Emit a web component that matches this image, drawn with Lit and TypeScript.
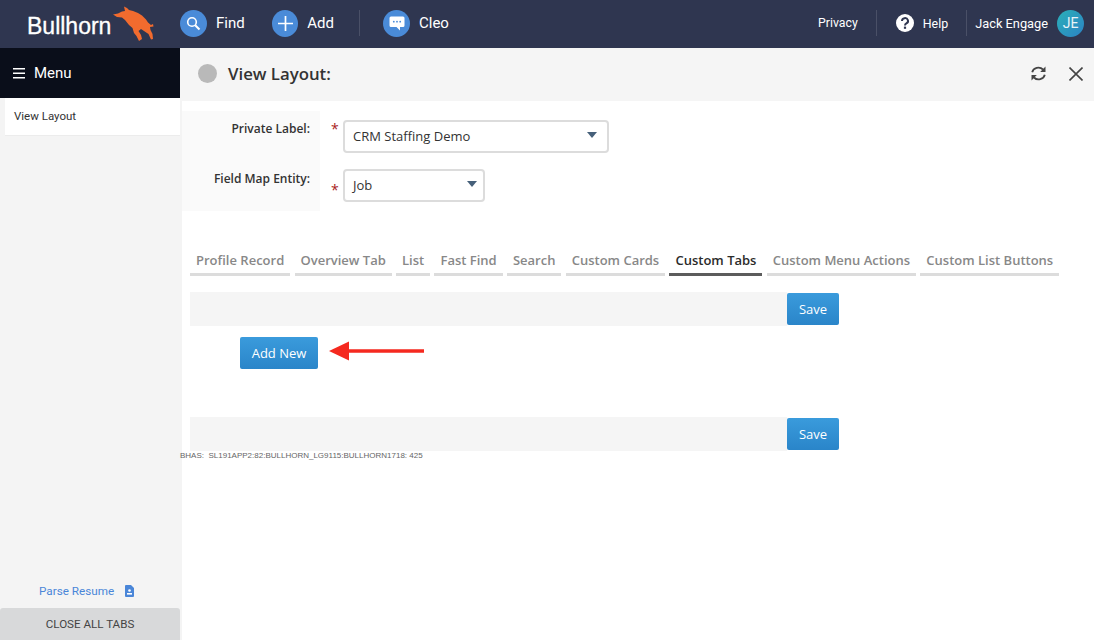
import { LitElement, html, css, svg } from "lit";
import { customElement, property } from "lit/decorators.js";

const TABS = [
  "Profile Record",
  "Overview Tab",
  "List",
  "Fast Find",
  "Search",
  "Custom Cards",
  "Custom Tabs",
  "Custom Menu Actions",
  "Custom List Buttons",
];

const bull = svg`<svg class="bull" width="50" height="42" viewBox="0 0 50 42">
  <path fill="#f26b2e" d="M5 12.5 L10 11.5 L14 9.5 L17 9 L16 4.5 L19 6 L21 8 L25 9 L30 11 L34 13.5 L38 17.5 L40 20.5 L43 23 L45 22 L45.5 24.5 L42 25 L42.5 28 L44.5 32 L45 37 L43 37.5 L40.5 32 L36 29 L33 27 L30.5 29 L33 33 L34 37 L31 39 L28.5 34 L26 31 L24.5 26 L21 23 L17 18 L14 15.5 L9 15 Z"/>
</svg>`;

@customElement("top-bar")
export class TopBar extends LitElement {
  static styles = css`
    :host {
      display: flex;
      align-items: center;
      height: 48px;
      background: #2f3650;
      color: #fff;
      font-family: Roboto, sans-serif;
      padding-bottom: 2px;
      box-sizing: border-box;
    }
    .logo {
      display: flex;
      align-items: flex-start;
      width: 180px;
      padding-left: 27px;
      box-sizing: border-box;
      height: 46px;
    }
    .wordmark {
      font-family: "Liberation Sans", sans-serif;
      font-size: 23px;
      margin-top: 13px;
      line-height: 27px;
      -webkit-text-stroke: 0.3px #fff;
    }
    .bull {
      margin-left: -3px;
      margin-top: 2px;
      flex: none;
    }
    .action {
      display: flex;
      align-items: center;
      gap: 9px;
      font-size: 15px;
    }
    .circle {
      width: 27px;
      height: 27px;
      border-radius: 50%;
      background: #4a8bd8;
      display: flex;
      align-items: center;
      justify-content: center;
    }
    .find {
      width: 65px;
      margin-right: 27px;
    }
    .add {
      width: 62px;
    }
    .divider {
      width: 1px;
      height: 26px;
      background: #4a5067;
    }
    .first-div {
      margin-left: 25px;
      margin-right: 23px;
    }
    .right {
      margin-left: auto;
      display: flex;
      align-items: center;
      font-size: 12.8px;
      padding-right: 10px;
    }
    .privacy {
      margin-right: 18px;
      font-size: 12.3px;
    }
    .help {
      display: flex;
      align-items: center;
      gap: 9px;
      margin: 0 18px 0 19px;
      font-size: 12.4px;
    }
    .user {
      margin: 0 9px 0 8px;
    }
    .avatar {
      width: 27px;
      height: 27px;
      border-radius: 50%;
      background: linear-gradient(135deg, #2bb0b8, #2b82c4);
      display: flex;
      align-items: center;
      justify-content: center;
      font-size: 14px;
      color: #e8f4f8;
    }
  `;

  render() {
    return html`
      <div class="logo"><span class="wordmark">Bullhorn</span>${bull}</div>
      <div class="action find">
        <span class="circle">
          <svg width="15" height="15" viewBox="0 0 15 15" fill="none" stroke="#fff" stroke-width="1.6">
            <circle cx="6" cy="6" r="4.3"></circle>
            <path d="M9.2 9.2 L13.5 13.5" stroke-width="2"></path>
          </svg>
        </span>
        Find
      </div>
      <div class="action add">
        <span class="circle">
          <svg width="15" height="15" viewBox="0 0 15 15" stroke="#fff" stroke-width="1.7">
            <path d="M7.5 0 V15 M0 7.5 H15"></path>
          </svg>
        </span>
        Add
      </div>
      <div class="divider first-div"></div>
      <div class="action">
        <span class="circle">
          <svg width="16" height="15" viewBox="0 0 16 15">
            <path fill="#fff" d="M2 0.5 H14 A1.5 1.5 0 0 1 15.5 2 V9.5 A1.5 1.5 0 0 1 14 11 H11 V14.5 L7.5 11 H2 A1.5 1.5 0 0 1 0.5 9.5 V2 A1.5 1.5 0 0 1 2 0.5 Z"></path>
            <circle cx="4.8" cy="5.7" r="0.9" fill="#4a8bd8"></circle>
            <circle cx="8" cy="5.7" r="0.9" fill="#4a8bd8"></circle>
            <circle cx="11.2" cy="5.7" r="0.9" fill="#4a8bd8"></circle>
          </svg>
        </span>
        Cleo
      </div>
      <div class="right">
        <span class="privacy">Privacy</span>
        <div class="divider"></div>
        <div class="help">
          <svg width="18" height="18" viewBox="0 0 18 18">
            <circle cx="9" cy="9" r="9" fill="#fff"></circle>
            <path d="M6 7 A3 2.8 0 1 1 10.4 9.4 C9.4 10 9 10.4 9 11.4" fill="none" stroke="#2f3650" stroke-width="2"></path>
            <rect x="7.9" y="12.6" width="2.2" height="2.2" fill="#2f3650"></rect>
          </svg>
          Help
        </div>
        <div class="divider"></div>
        <span class="user">Jack Engage</span>
        <span class="avatar">JE</span>
      </div>
    `;
  }
}

@customElement("side-menu")
export class SideMenu extends LitElement {
  static styles = css`
    :host {
      display: flex;
      flex-direction: column;
      width: 180px;
      flex: none;
      background: #f4f4f4;
      box-shadow: 2px 0 0 #f4f4f4;
      font-family: Roboto, sans-serif;
    }
    .head {
      height: 50px;
      background: #0a0e1a;
      color: #fff;
      display: flex;
      align-items: center;
      gap: 9px;
      padding-left: 13px;
      font-size: 15px;
      box-sizing: border-box;
    }
    .item {
      height: 38px;
      margin-left: 5px;
      background: #fff;
      border-bottom: 1px solid #ececec;
      box-sizing: border-box;
      display: flex;
      align-items: center;
      padding: 0 0 1px 9px;
      font-size: 11.5px;
      color: #333;
    }
    .parse {
      margin-top: auto;
      display: flex;
      align-items: center;
      gap: 11px;
      padding-left: 39px;
      height: 34px;
      font-size: 11.7px;
      color: #4a86d8;
    }
    .close {
      height: 32px;
      background: #d8d9da;
      border-radius: 3px 3px 0 0;
      display: flex;
      align-items: center;
      justify-content: center;
      font-size: 11.6px;
      color: #444;
    }
  `;

  render() {
    return html`
      <div class="head">
        <svg width="12" height="11" viewBox="0 0 12 11" fill="#fff">
          <rect y="0" width="12" height="1.5"></rect>
          <rect y="4.5" width="12" height="1.5"></rect>
          <rect y="9" width="12" height="1.5"></rect>
        </svg>
        Menu
      </div>
      <div class="item">View Layout</div>
      <div class="parse">
        Parse Resume
        <svg width="9" height="12" viewBox="0 0 9 12">
          <path fill="#4a86d8" d="M1 0 H6 L9 3 V11 A1 1 0 0 1 8 12 H1 A1 1 0 0 1 0 11 V1 A1 1 0 0 1 1 0 Z"></path>
          <circle cx="4.5" cy="5.5" r="1.3" fill="#fff"></circle>
          <rect x="2" y="8" width="5" height="1.6" fill="#fff"></rect>
        </svg>
      </div>
      <div class="close">CLOSE ALL TABS</div>
    `;
  }
}

@customElement("select-box")
export class SelectBox extends LitElement {
  @property() value = "";
  @property({ type: Number }) width = 100;

  static styles = css`
    :host {
      display: block;
    }
    .box {
      height: 33px;
      box-sizing: border-box;
      border: 2px solid #dcdcdc;
      border-radius: 4px;
      background: #fff;
      display: flex;
      align-items: center;
      justify-content: space-between;
      padding: 0 10px 2px 8px;
      font-size: 13px;
      color: #333;
    }
    :host([narrow]) .box {
      padding-right: 6px;
    }
    .caret {
      width: 0;
      height: 0;
      border-left: 5px solid transparent;
      border-right: 5px solid transparent;
      border-top: 6px solid #46607a;
      margin-bottom: 1px;
    }
  `;

  render() {
    return html`<div class="box" style="width:${this.width}px">
      <span>${this.value}</span><span class="caret"></span>
    </div>`;
  }
}

@customElement("app-root")
export class AppRoot extends LitElement {
  static styles = css`
    :host {
      display: flex;
      flex-direction: column;
      height: 640px;
      width: 1094px;
      overflow: hidden;
      font-family: "Open Sans", sans-serif;
      background: #fff;
    }
    .body {
      flex: 1;
      display: flex;
      min-height: 0;
    }
    .main {
      flex: 1;
      display: flex;
      flex-direction: column;
      min-width: 0;
    }
    .title-row {
      height: 53px;
      background: #f5f5f5;
      display: flex;
      align-items: center;
      padding: 0 11px 2px 18px;
      box-sizing: border-box;
      flex: none;
    }
    .dot {
      width: 19px;
      height: 19px;
      border-radius: 50%;
      background: #b9b9b9;
      margin-right: 11px;
    }
    .title {
      font-size: 16.8px;
      font-weight: 600;
      color: #333;
    }
    .tools {
      margin-left: auto;
      display: flex;
      align-items: center;
      gap: 23px;
    }
    .form-wrap {
      display: flex;
      flex: none;
    }
    .labels {
      width: 138px;
      background: #fafafa;
      height: 100px;
      margin-top: 10px;
      margin-left: 2px;
      flex: none;
    }
    .label {
      text-align: right;
      font-size: 12px;
      font-weight: 600;
      color: #333;
      padding-right: 10px;
      height: 50px;
      box-sizing: border-box;
      padding-top: 9px;
      line-height: 17px;
    }
    .fields {
      margin-top: 19px;
      display: flex;
      flex-direction: column;
      gap: 16px;
    }
    .field {
      display: flex;
      gap: 5px;
    }
    .star {
      color: #a81c1c;
      font-size: 14px;
      line-height: 14px;
      width: 7px;
      margin-left: 11px;
    }
    .star.low {
      margin-top: 14px;
    }
    .star.high {
      margin-top: 2px;
    }
    .tabs {
      display: flex;
      gap: 4.25px;
      margin: 39px 0 0 10px;
      flex: none;
    }
    .tab {
      padding: 0 6px 4px;
      height: 26px;
      box-sizing: border-box;
      border-bottom: 3px solid #dcdcdc;
      font-size: 13px;
      font-weight: 600;
      color: #888;
      display: flex;
      align-items: center;
      white-space: nowrap;
    }
    .tab.active {
      color: #2b2b2b;
      border-bottom-color: #5c5c5c;
    }
    .save-row {
      margin-left: 10px;
      display: flex;
      align-items: center;
      height: 34px;
    }
    .save-bar {
      width: 597px;
      height: 34px;
      background: #f5f5f5;
    }
    .btn {
      background: linear-gradient(#3a9bdc, #2a85c9);
      color: #fff;
      font-size: 13px;
      border-radius: 2px;
      display: flex;
      align-items: center;
      justify-content: center;
      height: 32px;
    }
    .save {
      width: 52px;
    }
    .first {
      margin-top: 16px;
    }
    .add-row {
      display: flex;
      align-items: center;
      margin: 11px 0 0 60px;
      height: 32px;
    }
    .add-new {
      width: 78px;
    }
    .arrow {
      margin: 0 0 4px 11px;
    }
    .second {
      margin-top: 48px;
    }
    .debug {
      font-family: "Liberation Sans", sans-serif;
      font-size: 8px;
      color: #666;
      line-height: 10px;
      white-space: pre;
    }
  `;

  render() {
    return html`
      <top-bar></top-bar>
      <div class="body">
        <side-menu></side-menu>
        <div class="main">
          <div class="title-row">
            <span class="dot"></span>
            <span class="title">View Layout:</span>
            <div class="tools">
              <svg width="15" height="15" viewBox="0 0 15 15" fill="none" stroke="#444" stroke-width="1.8">
                <path d="M1.2 6.2 A6.3 5.8 0 0 1 12 3.5"></path>
                <path d="M14.5 0.6 V6 H9.2 Z" fill="#444" stroke="none"></path>
                <path d="M13.8 8.8 A6.3 5.8 0 0 1 3 11.5"></path>
                <path d="M0.5 14.4 V9 H5.8 Z" fill="#444" stroke="none"></path>
              </svg>
              <svg width="14" height="14" viewBox="0 0 14 14" stroke="#444" stroke-width="1.6">
                <path d="M0.5 0.5 L13.5 13.5 M13.5 0.5 L0.5 13.5"></path>
              </svg>
            </div>
          </div>
          <div class="form-wrap">
            <div class="labels">
              <div class="label">Private Label:</div>
              <div class="label">Field Map Entity:</div>
            </div>
            <div class="fields">
              <div class="field">
                <span class="star high">*</span>
                <select-box value="CRM Staffing Demo" width="266"></select-box>
              </div>
              <div class="field">
                <span class="star low">*</span>
                <select-box narrow value="Job" width="142"></select-box>
              </div>
            </div>
          </div>
          <div class="tabs">
            ${TABS.map(
              (t) => html`<div class="tab ${t === "Custom Tabs" ? "active" : ""}">${t}</div>`,
            )}
          </div>
          <div class="save-row first">
            <div class="save-bar"></div>
            <div class="btn save">Save</div>
          </div>
          <div class="add-row">
            <div class="btn add-new">Add New</div>
            <svg class="arrow" width="95" height="20" viewBox="0 0 95 20">
              <path fill="#f5291f" d="M0 10 L20 0.5 V8.3 H95 V11.7 H20 V19.5 Z"></path>
            </svg>
          </div>
          <div class="save-row second">
            <div class="save-bar"></div>
            <div class="btn save">Save</div>
          </div>
          <div class="debug">BHAS:  SL191APP2:82:BULLHORN_LG9115:BULLHORN1718: 425</div>
        </div>
      </div>
    `;
  }
}
